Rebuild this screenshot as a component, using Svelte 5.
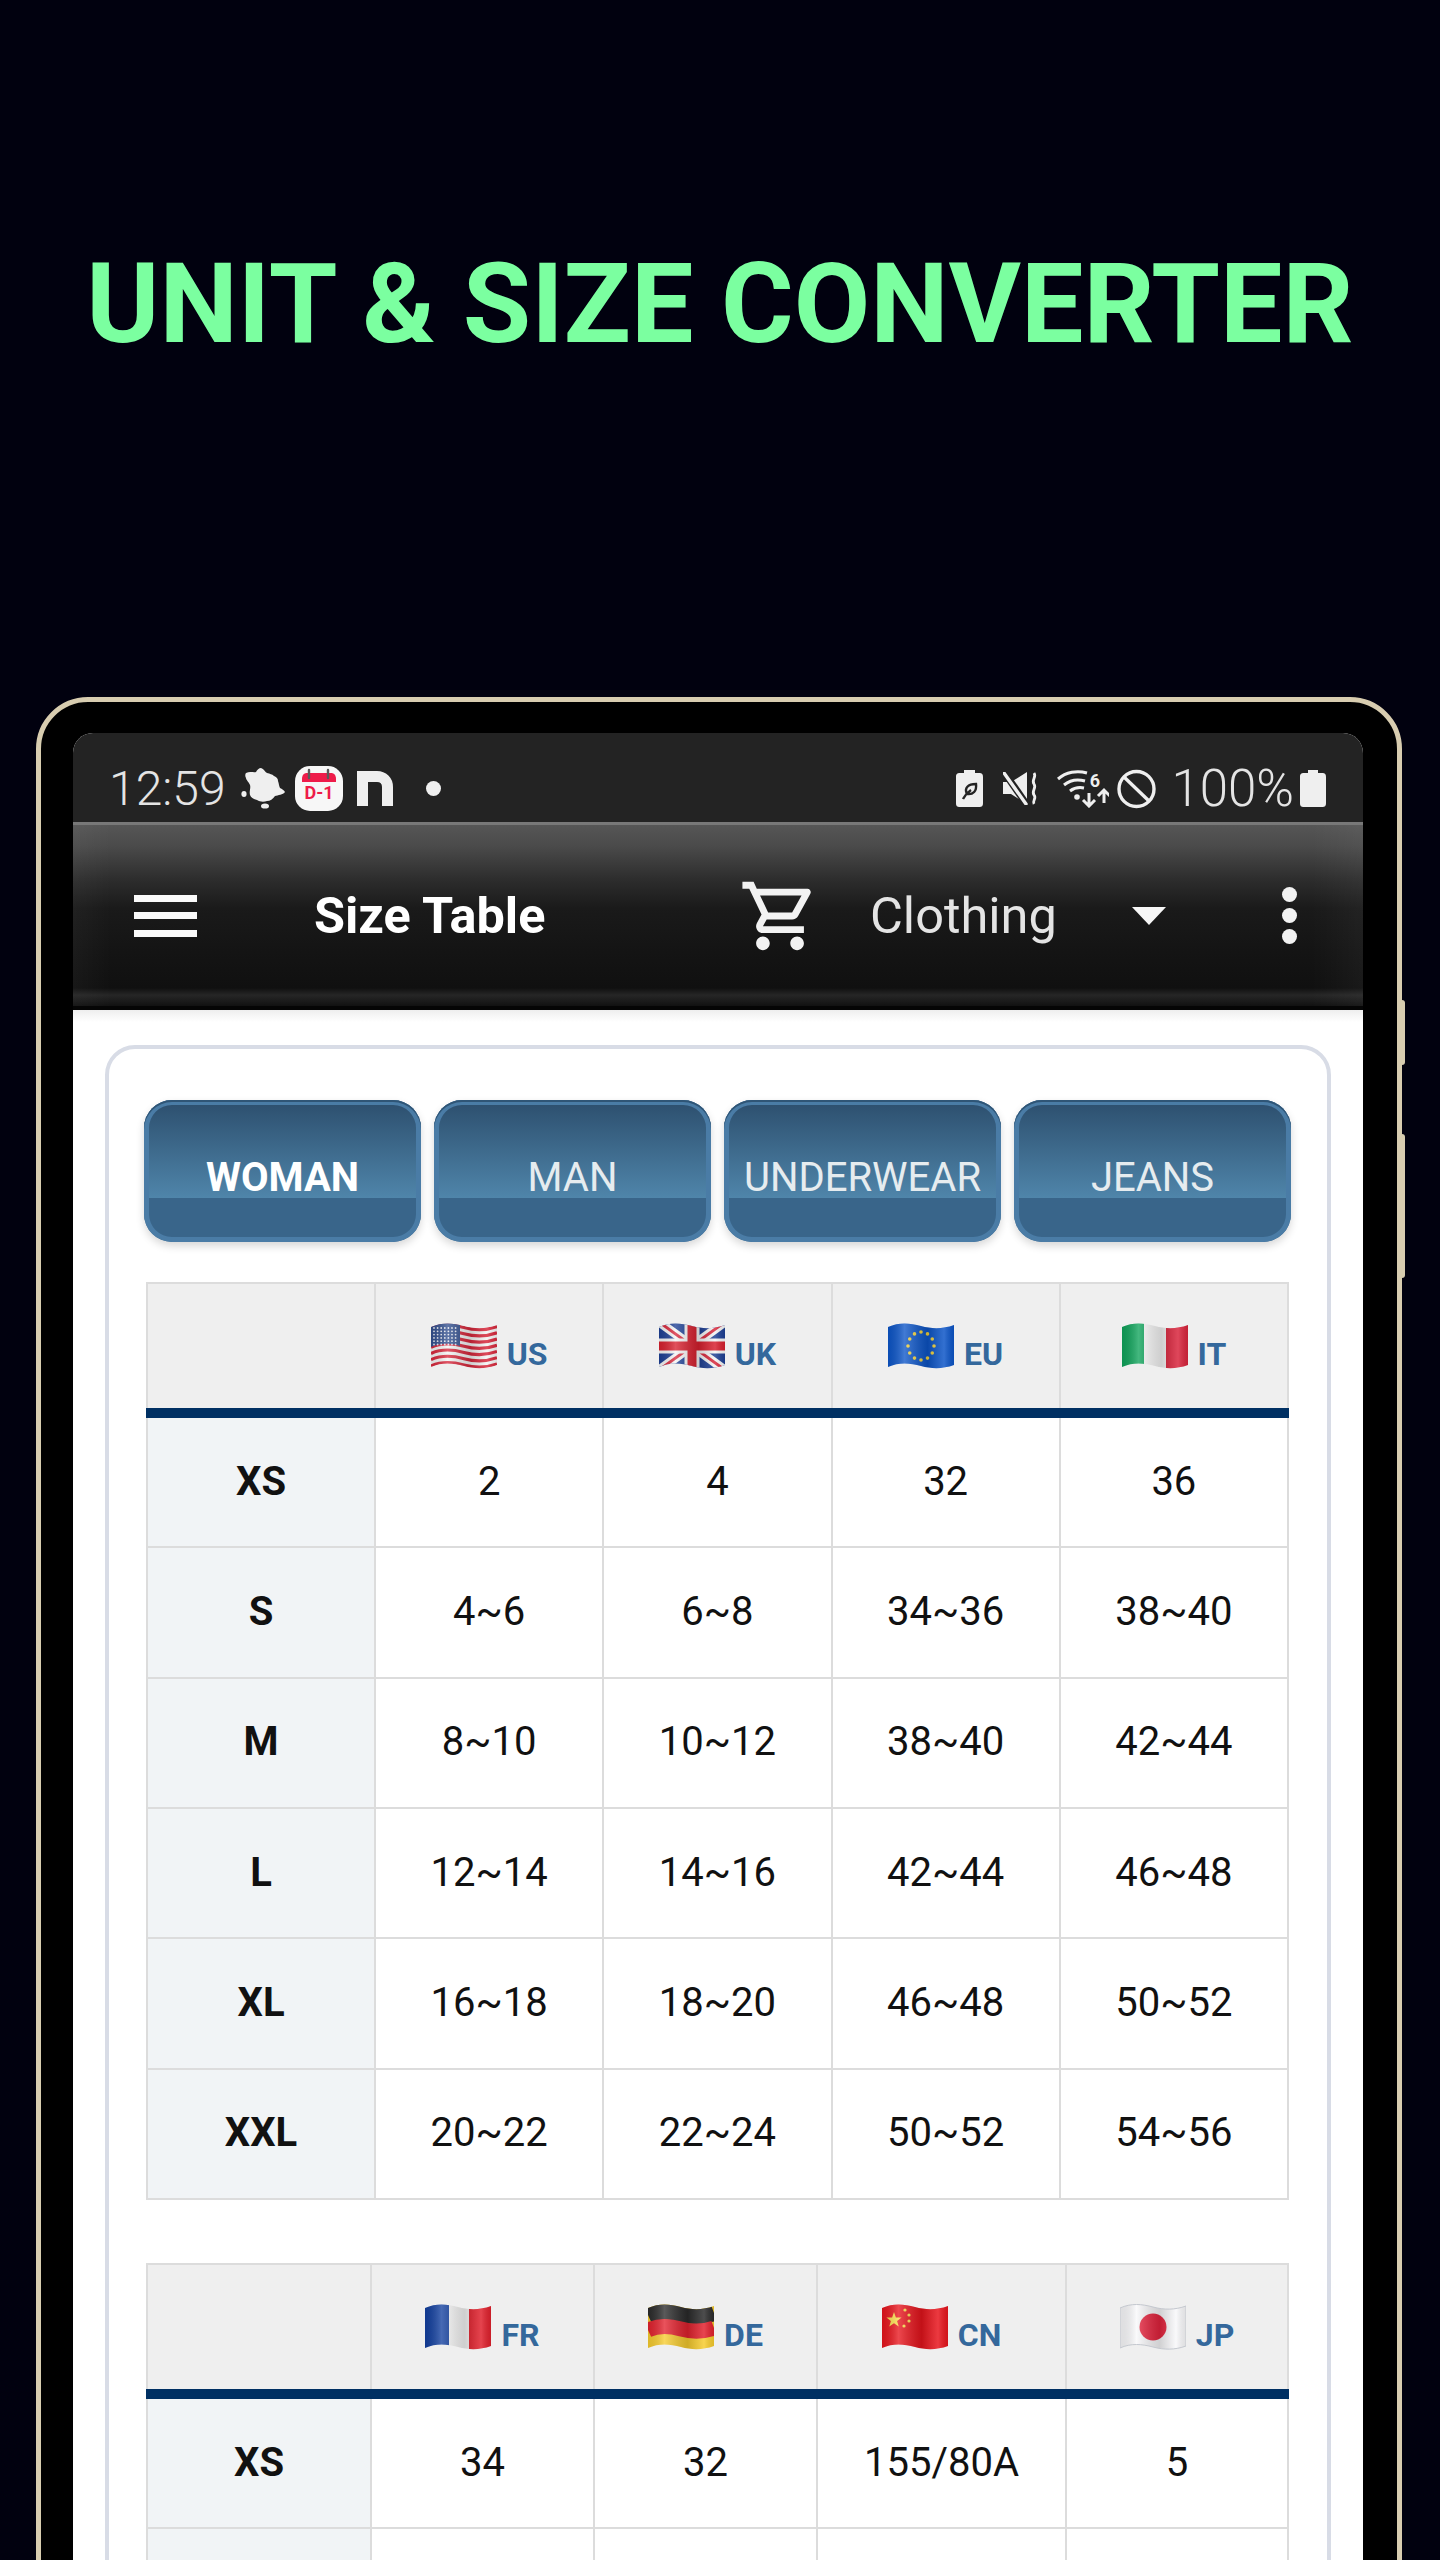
<script>
	const tabs = ['WOMAN', 'MAN', 'UNDERWEAR', 'JEANS'];

	const tables = [
		{
			name: 'first',
			countries: ['US', 'UK', 'EU', 'IT'],
			rows: [
				['XS', '2', '4', '32', '36'],
				['S', '4~6', '6~8', '34~36', '38~40'],
				['M', '8~10', '10~12', '38~40', '42~44'],
				['L', '12~14', '14~16', '42~44', '46~48'],
				['XL', '16~18', '18~20', '46~48', '50~52'],
				['XXL', '20~22', '22~24', '50~52', '54~56']
			]
		},
		{
			name: 'second',
			countries: ['FR', 'DE', 'CN', 'JP'],
			// the second row runs off the bottom of the page, only its top shows
			rows: [
				['XS', '34', '32', '155/80A', '5'],
				['', '', '', '', '']
			]
		}
	];

	const wave = 'M0 5C11 0 22 1 33 4S55 7 66 3V43C55 47 44 47 33 44S11 40 0 45Z';
	const waveLine = (y) => `M0 ${5 + y}C11 ${y} 22 ${1 + y} 33 ${4 + y}S55 ${7 + y} 66 ${3 + y}`;

	const usStripes = Array.from({ length: 13 }, (_, i) => i);
	const cantonDots = [];
	for (let r = 0; r < 6; r++) {
		for (let c = 0; c < 7; c++) cantonDots.push([3 + c * 3.6, 6 + r * 3.3]);
	}
	const euStars = Array.from({ length: 12 }, (_, i) => {
		const a = (i * Math.PI) / 6;
		return [33 + Math.cos(a) * 13, 24 + Math.sin(a) * 14];
	});
</script>

{#snippet flag(code)}
	<svg class="flag" viewBox="0 0 66 48" aria-hidden="true">
		<g clip-path="url(#flag-clip)">
			{#if code === 'US'}
				<rect width="66" height="48" fill="#f4f4f4" />
				{#each usStripes as i}
					{#if i % 2 === 0}
						<path d={waveLine(i * 3.12 + 1.5)} fill="none" stroke="#d8283c" stroke-width="3.12" />
					{/if}
				{/each}
				<path d="M0 0H29V24C20 21 10 21 0 25Z" fill="#33508f" />
				{#each cantonDots as d}
					<circle cx={d[0]} cy={d[1]} r="0.9" fill="#e6e9f2" />
				{/each}
			{:else if code === 'UK'}
				<rect width="66" height="48" fill="#1d3f94" />
				<path d="M0 0L66 48M66 0L0 48" stroke="#f4f4f4" stroke-width="9" />
				<path d="M0 0L66 48M66 0L0 48" stroke="#d8283c" stroke-width="3" />
				<path d="M33 0V48M0 24H66" stroke="#f4f4f4" stroke-width="15" />
				<path d="M33 0V48M0 24H66" stroke="#d8202e" stroke-width="9" />
			{:else if code === 'EU'}
				<rect width="66" height="48" fill="#0c55c8" />
				{#each euStars as s}
					<circle cx={s[0]} cy={s[1]} r="1.8" fill="#f3d33c" />
				{/each}
			{:else if code === 'IT'}
				<rect width="22" height="48" fill="#0ea35a" />
				<rect x="22" width="22" height="48" fill="#f6f6f6" />
				<rect x="44" width="22" height="48" fill="#d9243c" />
			{:else if code === 'FR'}
				<rect width="24" height="48" fill="#123f9f" />
				<rect x="24" width="20" height="48" fill="#f6f6f6" />
				<rect x="44" width="22" height="48" fill="#e0202c" />
			{:else if code === 'DE'}
				<rect width="66" height="48" fill="#f7cc2e" />
				<path d={waveLine(7)} fill="none" stroke="#2b2b2b" stroke-width="16" />
				<path d={waveLine(22)} fill="none" stroke="#e3222e" stroke-width="15" />
			{:else if code === 'CN'}
				<rect width="66" height="48" fill="#e8141c" />
				<polygon points="12,9 13.9,14.4 19.6,14.5 15.1,18 16.7,23.4 12,20.2 7.3,23.4 8.9,18 4.4,14.5 10.1,14.4" fill="#f9dc4a" />
				<circle cx="23" cy="7" r="1.6" fill="#f9dc4a" />
				<circle cx="27" cy="12" r="1.6" fill="#f9dc4a" />
				<circle cx="27" cy="18" r="1.6" fill="#f9dc4a" />
				<circle cx="22" cy="23" r="1.6" fill="#f9dc4a" />
			{:else if code === 'JP'}
				<rect width="66" height="48" fill="#f8f8fa" />
				<circle cx="33" cy="24" r="13.5" fill="#e6243e" />
			{/if}
			<rect width="66" height="48" fill="url(#flag-shade)" />
		</g>
		{#if code === 'JP'}
			<path d={wave} fill="none" stroke="#c4c8cf" stroke-width="1" />
		{/if}
	</svg>
{/snippet}

<svg class="defs" width="0" height="0" aria-hidden="true">
	<defs>
		<clipPath id="flag-clip"><path d={wave} /></clipPath>
		<linearGradient id="flag-shade">
			<stop offset="0" stop-color="#000" stop-opacity="0.1" />
			<stop offset="0.25" stop-color="#fff" stop-opacity="0.22" />
			<stop offset="0.6" stop-color="#000" stop-opacity="0.16" />
			<stop offset="0.85" stop-color="#fff" stop-opacity="0.16" />
			<stop offset="1" stop-color="#000" stop-opacity="0.1" />
		</linearGradient>
	</defs>
</svg>

<div class="page">
	<h1>UNIT &amp; SIZE CONVERTER</h1>

	<div class="device">
		<span class="side-btn upper"></span>
		<span class="side-btn lower"></span>

		<div class="screen">
			<div class="statusbar">
				<div class="status-left">
					<span class="time">12:59</span>
					<svg class="ic-bird" viewBox="0 0 44 42" aria-hidden="true">
						<path
							d="M5 5C9 3 13 5 15 4C16 2 18 0 20 0C23 1 24 4 26 5C29 6 31 6 33 8C36 9 37 11 37 13C38 16 38 18 39 20C41 21 43 22 44 24C42 27 37 27 34 28C32 31 29 33 26 33C23 34 19 34 16 32C13 31 10 30 9 27C8 23 10 20 9 17C8 14 5 12 5 10C4 8 4 6 5 5Z"
							fill="#efefef"
						/>
						<ellipse cx="3" cy="26" rx="2.6" ry="3" fill="#efefef" />
						<ellipse cx="24" cy="38" rx="4" ry="2.6" fill="#efefef" />
					</svg>
					<svg class="ic-cal" viewBox="0 0 48 45" aria-hidden="true">
						<rect width="48" height="45" rx="15" fill="#f7f7f7" />
						<path d="M7 13C7 9 9 7 12 7H36C39 7 41 9 41 13V16H7Z" fill="#ee1c4a" />
						<path d="M14 4V12M33 4V12" stroke="#5a5a5a" stroke-width="2.4" stroke-linecap="round" />
						<text x="24" y="33" text-anchor="middle" class="cal-text">D-1</text>
					</svg>
					<svg class="ic-n" viewBox="0 0 36 35" aria-hidden="true">
						<path d="M5.5 35V5.5H20C26 5.5 30.5 10 30.5 16V35" fill="none" stroke="#efefef" stroke-width="11" />
					</svg>
					<span class="status-dot"></span>
				</div>
				<div class="status-right">
					<svg class="ic-batt-leaf" viewBox="0 0 27 37" aria-hidden="true">
						<path d="M8 0H19V3H23C26 3 27 4 27 7V33C27 36 26 37 23 37H4C1 37 0 36 0 33V7C0 4 1 3 4 3H8Z" fill="#efefef" />
						<path d="M11 24C8 18 12 14 20 14C21 21 17 25 11 24ZM7 29C9 25 12 22 15 20" fill="none" stroke="#232323" stroke-width="2.4" />
					</svg>
					<svg class="ic-mute" viewBox="0 0 35 33" aria-hidden="true">
						<path d="M0 10H8L24 0V32L8 22H0Z" fill="#efefef" />
						<path d="M1 0L24 33" stroke="#232323" stroke-width="7" />
						<path d="M1 1L23 32" stroke="#efefef" stroke-width="3.4" stroke-linecap="round" />
						<path d="M31 1C34 5 28 8 31 12C34 16 28 19 31 23C34 26 29 29 31 32" fill="none" stroke="#efefef" stroke-width="2.8" />
					</svg>
					<svg class="ic-wifi" viewBox="0 0 53 39" aria-hidden="true">
						<g fill="none" stroke="#efefef" stroke-width="3">
							<path d="M2 10C10 3 21 1 31 4" />
							<path d="M8 16C14 11 22 10 29 12" />
							<path d="M14 22C18 19 23 18 28 19" />
							<path d="M33 24V37M27 31L33 37L39 31" />
							<path d="M48 34V21M42 27L48 21L54 27" />
						</g>
						<circle cx="21" cy="28" r="2.8" fill="#efefef" />
						<text x="39" y="18" text-anchor="middle" class="wifi-text">6</text>
					</svg>
					<svg class="ic-block" viewBox="0 0 39 40" aria-hidden="true">
						<circle cx="19.5" cy="20" r="17.5" fill="none" stroke="#efefef" stroke-width="3.4" />
						<path d="M7 8L32 32" stroke="#efefef" stroke-width="3.4" />
					</svg>
					<span class="percent">100%</span>
					<svg class="ic-batt" viewBox="0 0 26 37" aria-hidden="true">
						<path d="M8 0H18V3H22C25 3 26 4 26 7V33C26 36 25 37 22 37H4C1 37 0 36 0 33V7C0 4 1 3 4 3H8Z" fill="#efefef" />
					</svg>
				</div>
			</div>

			<div class="appbar">
				<div class="burger"><i></i><i></i><i></i></div>
				<div class="title">Size Table</div>
				<svg class="cart" viewBox="0 0 24 24" aria-hidden="true">
					<path
						fill="#f2f2f2"
						d="M15.55 13c.75 0 1.41-.41 1.75-1.03l3.58-6.49c.37-.66-.11-1.48-.87-1.48H5.21l-.94-2H1v2h2l3.6 7.59-1.35 2.44C4.52 15.37 5.48 17 7 17h12v-2H7l1.1-2h7.45zM6.16 6h12.15l-2.76 5H8.53L6.16 6zM7 18c-1.1 0-1.99.9-1.99 2S5.9 22 7 22s2-.9 2-2-.9-2-2-2zm10 0c-1.1 0-1.99.9-1.99 2s.89 2 1.99 2 2-.9 2-2-.9-2-2-2z"
					/>
				</svg>
				<div class="select">Clothing</div>
				<div class="caret"></div>
				<div class="more"><i></i><i></i><i></i></div>
			</div>

			<div class="content">
				<div class="card">
					<div class="tabs">
						{#each tabs as tab, i}
							<div class="tab" class:active={i === 0}>{tab}</div>
						{/each}
					</div>

					{#each tables as table}
						<table class={table.name}>
							<colgroup>
								<col class="c0" /><col class="c1" /><col class="c2" /><col class="c3" /><col class="c4" />
							</colgroup>
							<thead>
								<tr>
									<th></th>
									{#each table.countries as code}
										<th>
											<span class="country">
												{@render flag(code)}
												<span class="code">{code}</span>
											</span>
										</th>
									{/each}
								</tr>
								<tr><td class="rule" colspan="5"></td></tr>
							</thead>
							<tbody>
								{#each table.rows as row}
									<tr>
										{#each row as cell, i}
											{#if i === 0}
												<th>{cell}</th>
											{:else}
												<td>{cell}</td>
											{/if}
										{/each}
									</tr>
								{/each}
							</tbody>
						</table>
					{/each}
				</div>
			</div>
		</div>
	</div>
</div>

<style>
	:global(body) {
		margin: 0;
		background: #01010f;
	}

	.defs {
		position: absolute;
	}

	.page {
		height: 2560px;
		overflow: hidden;
		background: #01010f;
		font-family: Roboto, 'Liberation Sans', sans-serif;
	}

	h1 {
		margin: 0;
		height: 697px;
		padding-top: 239px;
		box-sizing: border-box;
		font-size: 111px;
		line-height: 130px;
		font-weight: 700;
		text-align: center;
		color: #7bffa0;
		white-space: nowrap;
	}

	.device {
		position: relative;
		width: 1366px;
		height: 1900px;
		margin-left: 36px;
		box-sizing: border-box;
		border: 5px solid #d8cdb0;
		border-radius: 52px 52px 0 0;
		background: #000;
		padding: 31px 34px 0 32px;
	}

	.side-btn {
		position: absolute;
		right: -8px;
		width: 4px;
		background: #d8cdb0;
		border-radius: 0 3px 3px 0;
	}
	.side-btn.upper {
		top: 298px;
		height: 65px;
	}
	.side-btn.lower {
		top: 432px;
		height: 144px;
	}

	.screen {
		height: 100%;
		background: #fff;
		border-radius: 20px 20px 0 0;
		overflow: hidden;
	}

	.statusbar {
		display: flex;
		justify-content: space-between;
		align-items: center;
		height: 89px;
		padding: 22px 37px 0 36px;
		box-sizing: border-box;
		background: #232323;
		color: #e4e4e4;
	}
	.status-left,
	.status-right {
		display: flex;
		align-items: center;
	}

	.time {
		font-size: 48px;
		font-weight: 300;
		line-height: 46px;
		margin-right: 15px;
	}
	.percent {
		font-size: 51px;
		font-weight: 300;
		line-height: 46px;
		margin: 0 6px 0 15px;
	}
	.cal-text {
		font: 700 18px Roboto, sans-serif;
		fill: #ee1c4a;
	}
	.wifi-text {
		font: 700 18px Roboto, sans-serif;
		fill: #efefef;
	}
	.ic-bird {
		width: 44px;
		height: 42px;
		margin-right: 10px;
	}
	.ic-cal {
		width: 48px;
		height: 45px;
		margin-right: 14px;
	}
	.ic-n {
		width: 36px;
		height: 35px;
		margin-right: 33px;
	}
	.status-dot {
		width: 15px;
		height: 15px;
		border-radius: 50%;
		background: #efefef;
	}
	.ic-batt-leaf {
		width: 27px;
		height: 37px;
		margin-right: 20px;
	}
	.ic-mute {
		width: 35px;
		height: 33px;
		margin-right: 18px;
	}
	.ic-wifi {
		width: 53px;
		height: 39px;
		margin-right: 8px;
	}
	.ic-block {
		width: 39px;
		height: 40px;
	}
	.ic-batt {
		width: 26px;
		height: 37px;
	}

	.appbar {
		display: flex;
		align-items: center;
		height: 188px;
		padding: 0 66px 0 61px;
		box-sizing: border-box;
		border-top: 3px solid #787878;
		border-bottom: 4px solid #050505;
		background:
			linear-gradient(90deg, rgba(255, 255, 255, 0.03), transparent 3%, transparent 96%, rgba(255, 255, 255, 0.04)),
			linear-gradient(#565656 0, #4a4a4a 12%, #2d2d2d 30%, #1a1a1a 46%, #141414 70%, #101010 90%, #262626 94%, #111 100%);
		color: #fff;
	}
	.burger {
		display: flex;
		flex-direction: column;
		justify-content: space-between;
		width: 63px;
		height: 42px;
		margin-right: 117px;
	}
	.burger i {
		height: 7px;
		background: #fafafa;
	}
	.title {
		flex: 1;
		font-size: 50.4px;
		font-weight: 700;
		white-space: nowrap;
	}
	.cart {
		width: 82px;
		height: 82px;
		margin-right: 49px;
	}
	.select {
		width: 186px;
		margin-right: 76px;
		font-size: 50.5px;
		color: #e4e4e4;
		white-space: nowrap;
	}
	.caret {
		width: 0;
		height: 0;
		border-left: 17px solid transparent;
		border-right: 17px solid transparent;
		border-top: 18px solid #f6f6f6;
		margin-right: 116px;
	}
	.more {
		display: flex;
		flex-direction: column;
		gap: 6px;
		width: 15px;
	}
	.more i {
		width: 15px;
		height: 15px;
		border-radius: 50%;
		background: #f2f2f2;
	}

	.content {
		padding: 35px 32px 0;
		background: linear-gradient(#eeeeee, #fff 12px);
	}
	.card {
		height: 1600px;
		box-sizing: border-box;
		border: 4px solid #d8dce6;
		border-radius: 30px;
		background: #fff;
		padding: 51px 36px 0 35px;
	}

	.tabs {
		display: grid;
		grid-template-columns: repeat(4, 1fr);
		gap: 13px;
		margin-bottom: 40px;
	}
	.tab {
		display: flex;
		align-items: center;
		justify-content: center;
		height: 142px;
		box-sizing: border-box;
		padding-top: 12px;
		border-radius: 28px;
		background: linear-gradient(#2c4e6d 0, #4f85aa 69%, #39658a 69%, #39658a 100%);
		box-shadow:
			inset 0 2px 0 #2f5576,
			inset 0 0 0 5px #4a7ca6,
			0 4px 8px rgba(0, 0, 0, 0.16);
		font-size: 40px;
		color: #e6ecef;
		white-space: nowrap;
	}
	.tab.active {
		font-weight: 700;
		color: #fff;
	}

	table {
		width: 1143px;
		margin-left: 2px;
		table-layout: fixed;
		border-collapse: separate;
		border-spacing: 0;
		border-top: 2px solid #dcdcdc;
	}
	table.first {
		margin-bottom: 63px;
	}
	table.first .c0 {
		width: 230px;
	}
	table.second .c0 {
		width: 226px;
	}
	table.second .c1 {
		width: 223px;
	}
	table.second .c2 {
		width: 223px;
	}
	table.second .c3 {
		width: 249px;
	}
	th,
	td {
		box-sizing: border-box;
		padding: 0 0 2px;
		text-align: center;
		vertical-align: middle;
		border-right: 2px solid #dcdcdc;
		border-bottom: 2px solid #dcdcdc;
		font-size: 40px;
		color: #111;
	}
	th:first-child {
		border-left: 2px solid #dcdcdc;
	}
	thead th {
		height: 124px;
		padding: 0;
		background: #efefef;
		border-bottom: 0;
	}
	td.rule {
		height: 10px;
		padding: 0;
		border: 0;
		background: #003063;
		font-size: 0;
	}
	tbody th,
	tbody td {
		height: 130.33px;
	}
	tbody th {
		background: #f1f4f6;
		font-weight: 700;
	}

	.country {
		display: inline-flex;
		align-items: flex-end;
		gap: 10px;
		vertical-align: middle;
		margin-bottom: 2px;
	}
	.flag {
		width: 66px;
		height: 48px;
	}
	.code {
		position: relative;
		top: 2px;
		font-size: 32px;
		font-weight: 700;
		line-height: 36px;
		color: #34689c;
	}
</style>
